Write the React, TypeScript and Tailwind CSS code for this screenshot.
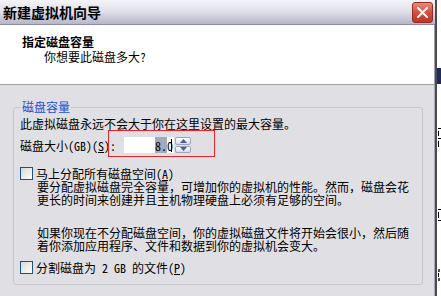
import React from 'react';

const FONT = "font-['Noto_Sans_Mono_CJK_SC','Noto_Sans_CJK_SC',sans-serif]";

function Checkbox() {
  return (
    <div className="w-[13px] h-[13px] shrink-0 border border-[#1c5180] bg-linear-to-br from-[#d8d8d2] to-white" />
  );
}

function Spinner() {
  return (
    <div className="flex flex-col w-[16px] h-[16px] gap-px">
      {[0, 1].map((i) => (
        <div
          key={i}
          className="flex-1 flex items-center justify-center rounded-[2px] border border-[#9ea6bd] bg-linear-to-b from-white to-[#d6dae6]"
        >
          <svg width="7" height="4" viewBox="0 0 7 4">
            {i === 0 ? <path d="M0 4 L3.5 0 L7 4 Z" fill="#4d6185" /> : <path d="M0 0 L3.5 4 L7 0 Z" fill="#4d6185" />}
          </svg>
        </div>
      ))}
    </div>
  );
}

function TitleBar() {
  return (
    <div className="flex items-center justify-between h-[25px] border-b border-[#8c8ca4] bg-linear-to-b from-[#f4f4f8] via-[#dedee8] to-[#b6b6ca] pl-[3px] pr-[2px]">
      <span className="text-[14px] font-bold leading-[25px]">新建虚拟机向导</span>
      <div className="flex items-center justify-center w-[21px] h-[21px] rounded-[3px] border border-[#9c2a22] bg-linear-to-b from-[#e98a7c] via-[#d2503f] to-[#b8382a]">
        <svg width="11" height="11" viewBox="0 0 11 11">
          <path d="M1 1 L10 10 M10 1 L1 10" stroke="white" strokeWidth="2" strokeLinecap="round" />
        </svg>
      </div>
    </div>
  );
}

// the window behind the dialog, of which only a sliver shows
function BackWindow() {
  return (
    <div className="flex flex-1 flex-col overflow-hidden bg-white">
      <div className="h-[68px]" />
      <div className="h-[16px] bg-[#1e2c5c]" />
      <div className="mt-[44px] flex flex-col gap-[2px] pl-px">
        <div className="h-px w-[3px] bg-black" />
        <div className="h-[5px] w-px bg-black" />
        <div className="h-px w-[3px] bg-black" />
        <div className="h-[6px] w-px bg-black" />
      </div>
      <div className="mt-[62px] flex flex-col gap-[2px] pl-px">
        <div className="h-px w-[3px] bg-black" />
        <div className="h-[6px] w-px bg-black" />
        <div className="h-px w-[3px] bg-black" />
      </div>
      <div className="mt-[48px] flex flex-col gap-px pl-px">
        <div className="h-[3px] w-[2px] bg-[#555]" />
        <div className="h-[4px] w-px bg-black" />
        <div className="h-[3px] w-[2px] bg-[#555]" />
      </div>
    </div>
  );
}

export default function App() {
  return (
    <div className={`flex w-[441px] h-[296px] overflow-hidden bg-white text-[12px] text-black ${FONT}`}>
      <div className="flex flex-col w-[437px] h-full shrink-0 border-r-2 border-[#4a4a58] bg-[#e0dfe3]">
        <TitleBar />

        <div className="h-[60px] border-b border-r border-[#a0a0a8] bg-white pl-[22px] pt-[9px] leading-[15px]">
          <div className="font-bold">指定磁盘容量</div>
          <div className="pl-[22px]">你想要此磁盘多大?</div>
        </div>

        <div className="flex-1 border-r border-[#a8a8b0]">
          <fieldset className="mt-[15px] ml-[13px] w-[410px] rounded-[3px] border border-[#c6c6cc] pl-[6px] pt-[3px] pb-[10px]">
            <legend className="ml-px px-px leading-[14px] text-[#1d4fd6]">磁盘容量</legend>

            <div className="leading-[13px] whitespace-nowrap">此虚拟磁盘永远不会大于你在这里设置的最大容量。</div>

            <div className="relative mt-[5px] flex h-[20px] items-center">
              <span className="w-[104px] leading-[13px] whitespace-nowrap">
                磁盘大小(GB)(<u>S</u>):
              </span>
              <div className="flex h-[16px] w-[50px] items-center justify-end overflow-hidden bg-white pr-[2px]">
                <span className="whitespace-nowrap leading-[13px]">
                  <span className="bg-[#a4aabd]">8.</span>0
                </span>
                <div className="ml-[-2px] h-[13px] w-px bg-black" />
              </div>
              <div className="ml-px">
                <Spinner />
              </div>
              <div className="pointer-events-none absolute left-[88px] top-[-5px] h-[27px] w-[107px] border border-[#e0282c]" />
            </div>

            <div className="mt-[12px] flex items-start gap-[3px]">
              <Checkbox />
              <span className="leading-[13px] whitespace-nowrap">
                马上分配所有磁盘空间(<u>A</u>)
              </span>
            </div>
            <div className="pl-[17px] leading-[13px] whitespace-nowrap">
              <div>要分配虚拟磁盘完全容量，可增加你的虚拟机的性能。然而，磁盘会花</div>
              <div>更长的时间来创建并且主机物理硬盘上必须有足够的空间。</div>
            </div>
            <div className="mt-[20px] pl-[17px] leading-[13px] whitespace-nowrap">
              <div>如果你现在不分配磁盘空间，你的虚拟磁盘文件将开始会很小，然后随</div>
              <div>着你添加应用程序、文件和数据到你的虚拟机会变大。</div>
            </div>

            <div className="mt-[9px] flex items-start gap-[3px]">
              <Checkbox />
              <span className="leading-[13px] whitespace-nowrap">
                分割磁盘为 2 GB 的文件(<u>P</u>)
              </span>
            </div>
          </fieldset>
        </div>
      </div>

      <BackWindow />
    </div>
  );
}
